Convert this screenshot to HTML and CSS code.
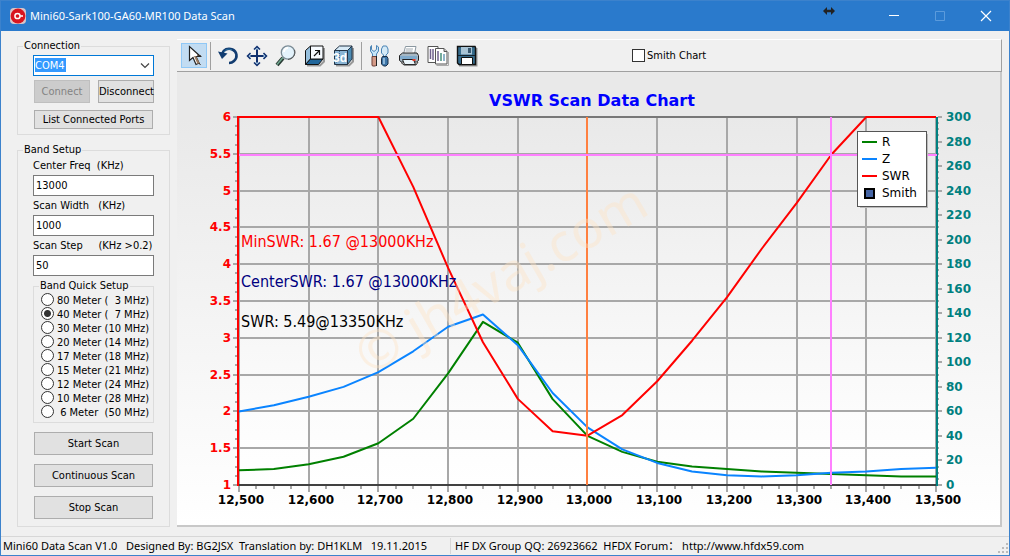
FILE: index.html
```html
<!DOCTYPE html>
<html lang="en">
<head>
	<meta charset="UTF-8" />
	<title>Mini60-Sark100-GA60-MR100 Data Scan</title>
	<link rel="stylesheet" href="styles.css">
</head>
<body>
	<header class="titleBar">
		<svg class="appIcon" width="16" height="16" viewBox="0 0 16 16">
			<rect width="16" height="16" rx="4" fill="#d8c4c8"/>
			<circle cx="8" cy="8" r="7.4" fill="#d8151f"/>
			<circle cx="7.5" cy="8" r="2.6" fill="none" stroke="#fff" stroke-width="1.5"/>
			<path d="M10 8h3M12 7v2" stroke="#fff" fill="none"/>
		</svg>
		<h1 class="title">Mini60-Sark100-GA60-MR100 Data Scan</h1>
		<div class="winButtons">
			<button type="button" aria-label="Minimize"><svg width="12" height="12" viewBox="0 0 12 12"><path d="M1 5.500h10" stroke="#fff"/></svg></button>
			<button type="button" aria-label="Maximize" disabled><svg width="12" height="12" viewBox="0 0 12 12"><path d="M1.5 1.5h9v9h-9z" stroke="#5b9bdc" fill="none"/></svg></button>
			<button type="button" aria-label="Close"><svg width="12" height="12" viewBox="0 0 12 12"><path d="M1 1l10 10M11 1L1 11" stroke="#fff" stroke-width="1.2"/></svg></button>
		</div>
		<svg class="resizeCursor" width="12" height="8" viewBox="0 0 12 8"><path d="M0 4l4-4v2.800h4V0l4 4-4 4V5.200H4V8z" fill="#222"/></svg>
	</header>

	<div class="content">
		<form class="sidebar" action="#">
			<fieldset class="group connection">
				<legend>Connection</legend>
				<div class="combo">
					<select class="field port" aria-label="Port">
						<option>COM4</option>
					</select>
					<svg width="10" height="6" viewBox="0 0 10 6"><path d="M1 .5l4 4 4-4" stroke="#444" stroke-width="1.2" fill="none"/></svg>
				</div>
				<div class="pair">
					<button type="button" class="btn" disabled>Connect</button>
					<button type="button" class="btn">Disconnect</button>
				</div>
				<div class="actions">
					<button type="button" class="btn thin">List Connected Ports</button>
				</div>
			</fieldset>

			<fieldset class="group band">
				<legend>Band Setup</legend>
				<label class="caption" for="centerFreq">Center Freq  (KHz)</label>
				<input class="field" id="centerFreq" type="text" value="13000" />
				<label class="caption" for="scanWidth">Scan Width   (KHz)</label>
				<input class="field" id="scanWidth" type="text" value="1000" />
				<label class="caption" for="scanStep">Scan Step     (KHz >0.2)</label>
				<input class="field" id="scanStep" type="text" value="50" />

				<fieldset class="group quick">
					<legend>Band Quick Setup</legend>
					<label><input type="radio" name="band" />80 Meter (  3 MHz)</label>
					<label><input type="radio" name="band" checked />40 Meter (  7 MHz)</label>
					<label><input type="radio" name="band" />30 Meter (10 MHz)</label>
					<label><input type="radio" name="band" />20 Meter (14 MHz)</label>
					<label><input type="radio" name="band" />17 Meter (18 MHz)</label>
					<label><input type="radio" name="band" />15 Meter (21 MHz)</label>
					<label><input type="radio" name="band" />12 Meter (24 MHz)</label>
					<label><input type="radio" name="band" />10 Meter (28 MHz)</label>
					<label><input type="radio" name="band" /> 6 Meter  (50 MHz)</label>
				</fieldset>

				<div class="actions">
					<button type="button" class="btn">Start Scan</button>
					<button type="button" class="btn">Continuous Scan</button>
					<button type="button" class="btn">Stop Scan</button>
				</div>
			</fieldset>
		</form>

		<main class="chartPanel">
			<div class="toolbar">
				<button type="button" class="tool active" aria-label="Select">
					<svg width="24" height="24" viewBox="0 0 24 24">
						<path d="M7.500 2.500v14l3.500-3 3 7 3-1.500-3-6.500h4.500z" fill="#fff" stroke="#222" stroke-width="1.2"/>
						<path d="M12 12l3.500 8 2-1-3.500-7z" fill="#9a7b62"/>
						<path d="M17 19l1.500 2M15 11l4 1" stroke="#3a2b22"/>
					</svg>
				</button>
				<span class="divider"></span>
				<button type="button" class="tool" aria-label="Rotate">
					<svg width="24" height="24" viewBox="0 0 24 24">
						<path d="M6 10c1.500-4.500 6-6.500 10.500-4.500s5.500 8 1.500 11.500c-1.500 1.500-3 2-5 2" fill="none" stroke="#123c70" stroke-width="2.600"/>
						<path d="M2 7.500l9.500 2-5.500 5.500z" fill="#123c70"/>
						<path d="M8 8c1.500-3 5-3.500 8-2" fill="none" stroke="#2f79a8"/>
					</svg>
				</button>
				<button type="button" class="tool" aria-label="Move">
					<svg width="24" height="24" viewBox="0 0 24 24">
						<path d="M12 3v18M3 12h18" stroke="#10306e" stroke-width="2"/>
						<path d="M9 5.500L12 2.500l3 3M9 18.500l3 3 3-3M5.500 9l-3 3 3 3M18.500 9l3 3-3 3" fill="#a8cde8" stroke="#10306e" stroke-width="1.500"/>
					</svg>
				</button>
				<button type="button" class="tool" aria-label="Zoom">
					<svg width="24" height="24" viewBox="0 0 24 24">
						<path d="M9 14l-6 7" stroke="#283a33" stroke-width="4"/>
						<path d="M9 13.500l-6 7" stroke="#70a890" stroke-width="1.500"/>
						<circle cx="14" cy="8.500" r="6.700" fill="#e3f2fb" stroke="#7b8b95" stroke-width="1.300"/>
						<path d="M20.500 6c1.500 5-2 9-6.500 9.500" fill="none" stroke="#555"/>
						<path d="M10 8c0-2.500 2-4 4-4" fill="none" stroke="#fff" stroke-width="2"/>
					</svg>
				</button>
				<button type="button" class="tool" aria-label="Depth">
					<svg width="24" height="24" viewBox="0 0 24 24">
						<path d="M4 21.500h13l4-4V4" fill="none" stroke="#999" stroke-width="2"/>
						<path d="M2.500 6.500l5-4.500v13l-5 5.500z" fill="#96bfdd" stroke="#111"/>
						<path d="M2.500 20.500l5-5.500H20l-4.500 5.500z" fill="#20669b" stroke="#111"/>
						<path d="M7.500 2H20v13H7.500z" fill="#f7fbff" stroke="#111"/>
						<path d="M11 12l5-5M12 6.500h4.500V11" fill="none" stroke="#111" stroke-width="1.200"/>
					</svg>
				</button>
				<button type="button" class="tool" aria-label="3D">
					<svg width="24" height="24" viewBox="0 0 24 24">
						<path d="M4 21.500h13l4-4V4" fill="none" stroke="#999" stroke-width="2"/>
						<path d="M2.500 6.500l5-4.500H20l-4.500 4.500z" fill="#d7eaf7" stroke="#234"/>
						<path d="M2.500 6.500h13v14h-13z" fill="#8ab5d5" stroke="#234"/>
						<path d="M15.500 6.500L20 2v13l-4.500 5.500z" fill="#4d8cb4" stroke="#234"/>
						<path d="M7.500 7v8l-5 5.500M7.500 15H20" fill="none" stroke="#39688d" stroke-dasharray="1 1"/>
						<text class="tag3d" x="1" y="18">3d</text>
					</svg>
				</button>
				<span class="divider"></span>
				<button type="button" class="tool" aria-label="Options">
					<svg width="24" height="24" viewBox="0 0 24 24">
						<path d="M3.500 1.500v4L6 7.500 8.500 5.500v-4l2 1.500v4L8.500 10v3h-4v-3L2.500 7V3z" fill="#c6e5f8" stroke="#4b84b5"/>
						<path d="M4 12.500h4.500V21l-1 1h-3L4 21z" fill="#d49a87" stroke="#6e4038"/>
						<path d="M8.500 12v10" stroke="#222"/>
						<path d="M15 2h3.500l1.500 3v4l-2 2v2h-2.500v-2l-2-2V5z" fill="#d4eaf7" stroke="#4b84b5"/>
						<path d="M14.500 12.500h4.500l1 2V20l-2 2h-2.500l-2-2v-5.500z" fill="#3e76a8" stroke="#192e48"/>
						<path d="M16 14v6" stroke="#a9cde8" stroke-width="1.500"/>
					</svg>
				</button>
				<button type="button" class="tool" aria-label="Print">
					<svg width="24" height="24" viewBox="0 0 24 24">
						<path d="M6.500 10l2-7.500H19l-1.500 7.500z" fill="#fff" stroke="#8b98a1"/>
						<path d="M9 5h7M8.500 7h7" stroke="#a0aab1"/>
						<path d="M2.500 11.500l3-2.500H20l1.500 2.500v5l-2 1.500H4.500l-2-1.500z" fill="#a7b8c4" stroke="#222"/>
						<path d="M3 12h17v3H3z" fill="#7faacc"/>
						<path d="M5.500 15.500h11l2 5h-11z" fill="#eaf5fb" stroke="#222"/>
						<path d="M15.500 15h3v2h-3z" fill="#e23b28"/>
						<path d="M4 18.500l3 2.500h12l2-3" stroke="#333" fill="none"/>
					</svg>
				</button>
				<button type="button" class="tool" aria-label="Copy">
					<svg width="24" height="24" viewBox="0 0 24 24">
						<path d="M2 2.500h10v16H2z" fill="#fff" stroke="#555"/>
						<path d="M4.500 5v10M7 5v11" stroke="#70618d" stroke-width="1.500"/>
						<path d="M9.500 4.500H18l3 3V20H9.500z" fill="#fff" stroke="#555"/>
						<path d="M18 4.500v3h3" fill="#ccc" stroke="#555"/>
						<path d="M12 7v10" stroke="#70618d" stroke-width="1.500"/>
						<path d="M15 9v8" stroke="#47917b" stroke-width="1.500"/>
						<path d="M18 10v7" stroke="#6b9bb9" stroke-width="1.500"/>
						<path d="M10.500 21.500H22.500V8" stroke="#aaa" fill="none"/>
					</svg>
				</button>
				<button type="button" class="tool" aria-label="Save">
					<svg width="24" height="24" viewBox="0 0 24 24">
						<path d="M4 21.500h17.500V4" stroke="#999" stroke-width="2" fill="none"/>
						<path d="M2.500 2.500H20l.5 1V20.500H4l-1.500-1.500z" fill="#356b8c" stroke="#111" stroke-width="1.400"/>
						<path d="M6 3h11v7.500H6z" fill="#a8c3d4"/>
						<path d="M13 4h3v5h-3z" fill="#37566d"/>
						<path d="M3 11.500h17" stroke="#14222d"/>
						<path d="M6.500 13.500h11v7h-11z" fill="#fff" stroke="#111"/>
					</svg>
				</button>
				<label class="smithToggle"><input type="checkbox" />Smith Chart</label>
			</div>
			<svg class="chart" id="chart" viewBox="0 0 823 453" role="img" aria-label="VSWR Scan Data Chart">
				<defs>
					<linearGradient id="panelFill" x1="0" y1="0" x2="0" y2="1">
						<stop offset="0.1" stop-color="#e9e9e9"/>
						<stop offset="1" stop-color="#fff"/>
					</linearGradient>
					<linearGradient id="plotFill" x1="0" y1="0" x2="0" y2="1">
						<stop offset="0" stop-color="#e9e9e9"/>
						<stop offset="0.800" stop-color="#fcfcfc"/>
						<stop offset="1" stop-color="#fff"/>
					</linearGradient>
				</defs>
				<rect width="823" height="453" fill="url(#panelFill)"/>
				<rect x="62" y="45" width="698" height="368" fill="url(#plotFill)"/>
				<text class="chartTitle" x="415" y="34">VSWR Scan Data Chart</text>
				<g id="grid"></g>
				<g id="series"></g>
				<path class="axisLeft" d="M61 44v370"/>
				<path class="axisRight" d="M760 45v369"/>
				<path class="marker center" d="M410 45v368"/>
				<path class="marker cursor" d="M654 45v368M62 83h698"/>
				<text class="note min" x="64" y="175">MinSWR: 1.67 @13000KHz</text>
				<text class="note mid" x="64" y="215">CenterSWR: 1.67 @13000KHz</text>
				<text class="note" x="64" y="255">SWR: 5.49@13350KHz</text>
				<g class="legend">
					<rect x="683" y="62" width="68" height="74" fill="#bbb"/>
					<rect x="680.500" y="59.500" width="69" height="75" fill="#fff" stroke="#555"/>
					<path d="M685 70h15" stroke="#008000" stroke-width="2"/>
					<path d="M685 87h15" stroke="#0a84ff" stroke-width="2"/>
					<path d="M685 104h15" stroke="#f00" stroke-width="2"/>
					<rect x="688" y="117" width="9" height="9" fill="#4565a5" stroke="#000" stroke-width="2"/>
					<text x="705" y="74">R</text>
					<text x="705" y="91">Z</text>
					<text x="705" y="108">SWR</text>
					<text x="705" y="125">Smith</text>
				</g>
				<text class="watermark" transform="translate(192 304) rotate(-30)">© jh4vaj.com</text>
			</svg>
		</main>
	</div>

	<footer class="statusBar">
		<div class="credits">Mini60 Data Scan V1.0   Designed By: BG2JSX  Translation by: DH1KLM   19.11.2015</div>
		<div class="links">HF DX Group QQ: 26923662  HFDX Forum： http://www.hfdx59.com</div>
		<svg class="grip" width="12" height="12" viewBox="0 0 12 12"><path d="M9 1h2M9 5h2M5 5h2M9 9h2M5 9h2M1 9h2" stroke="#bbb" stroke-width="2"/></svg>
	</footer>
	<script src="chart.js"></script>
</body>
</html>
```

FILE: styles.css
```css
*{
	box-sizing: border-box;
	margin: 0;padding: 0;
}
body{
	display: flex;
	flex-direction: column;
	min-height: 100vh;
	border: 1px solid #3c82cc;
	background: #f0f0f0;
	color: #000;
	font: 11px/14px "DejaVu Sans Condensed","Noto Sans",sans-serif;
}
button,input,select{
	font: inherit;
	color: inherit;
}
svg{
	display: block;
}

/* title bar */
.titleBar{
	position: relative;
	display: flex;
	align-items: center;
	height: 30px;
	padding-left: 9px;
	background: #2a7acc;
	color: #fff;
}
.title{
	flex: 1;
	margin-left: 4px;
	font: 11px/16px "Noto Sans",sans-serif;
}
.winButtons{
	display: flex;
}
.winButtons button{
	display: flex;
	align-items: center;
	justify-content: center;
	width: 46px;height: 30px;
	border: 0;
	background: none;
}
.resizeCursor{
	position: absolute;
	top: 6px;right: 174px;
}

/* left column */
.content{
	display: flex;
	flex: 1;
	padding: 8px 7px 8px 16px;
}
.sidebar{
	flex: none;
	width: 153px;
	margin-right: 7px;
}
.group{
	min-width: 0;
	border: 1px solid #dcdcdc;
}
.group legend{
	margin-left: -10px;
	padding: 0 1px;
	line-height: 12px;
}
.connection{
	margin-top: 1px;
	padding: 3px 15px 5px;
}
.band{
	margin-top: 9px;
	padding: 0 15px 7px;
}
.combo{
	position: relative;
}
.combo svg{
	position: absolute;
	top: 8px;right: 4px;
	pointer-events: none;
}
.field{
	display: block;
	width: 100%;height: 21px;
	padding: 0 2px;
	border: 1px solid #7a7a7a;
	background: #fff;
}
.port{
	appearance: none;
	padding: 0 1px;
	border-color: #0078d7;
	background: linear-gradient(#39f,#39f) 1px 2px / 31px 14px no-repeat #fff;
	color: #fff;
}
.pair{
	display: flex;
	justify-content: space-between;
	margin: 4px 0 7px 1px;
}
.btn{
	height: 23px;
	border: 1px solid #adadad;
	background: #e1e1e1;
	white-space: nowrap;
}
.btn:disabled{
	border-color: #bfbfbf;
	background: #ccc;
	color: #838383;
}
.pair .btn{
	width: 56px;
}
.btn.thin{
	height: 19px;
}
.caption{
	display: block;
	height: 19px;
	line-height: 19px;
	white-space: pre;
}
.group.quick{
	margin-top: 4px;
	padding: 2px 6px;
}
.quick legend{
	margin-left: -1px;
}
.quick label{
	display: flex;
	align-items: center;
	height: 14px;
	white-space: pre;
}
.quick input{
	appearance: none;
	flex: none;
	width: 13px;height: 13px;
	margin: 0 3px 3px 1px;
	border: 1px solid #333;
	border-radius: 50%;
	background: #fff;
}
.quick input:checked{
	background: radial-gradient(circle,#333 3px,#fff 4px);
}
.group .quick legend,.quick legend{
	margin-left: -1px;
}
.actions{
	display: flex;
	flex-direction: column;
	gap: 9px;
	padding: 0 1px;
}
.quick + .actions{
	margin-top: 9px;
}

/* toolbar */
.chartPanel{
	flex: 1;
	min-width: 0;
}
.toolbar{
	display: flex;
	align-items: center;
	height: 33px;
	padding-left: 4px;
	border-top: 1px solid #fff;
	border-right: 1px solid #a0a0a0;
	border-bottom: 1px solid #a0a0a0;
}
.tool{
	display: flex;
	align-items: center;
	justify-content: center;
	width: 29px;height: 25px;
	border: 0;
	background: none;
}
.tool.active{
	width: 26px;
	border: 1px solid #90c8f6;
	background: #c2dcf2;
}
.divider{
	width: 1px;height: 28px;
	margin: 0 3px;
	background: #a0a0a0;
}
.active + .divider{
	margin-right: 2px;
}
.tag3d{
	font: bold 12px "Liberation Sans",sans-serif;
	fill: #fff;
}
.smithToggle{
	display: flex;
	align-items: center;
	margin-left: 151px;
}
.smithToggle input{
	appearance: none;
	width: 13px;height: 13px;
	margin-right: 2px;
	border: 1px solid #333;
	background: #fff;
}

/* chart */
.chart{
	width: 100%;
	border: solid #c8c8c8;
	border-width: 0 2px 2px 0;
}
.chart text{
	font: 12px "DejaVu Sans",sans-serif;
}
.chart .chartTitle{
	font-size: 16px;
	font-weight: bold;
	text-anchor: middle;
	fill: #00f;
}
.chart .note{
	font: 16px "DejaVu Sans Condensed","Noto Sans",sans-serif;
}
.chart .min{
	fill: #f00;
}
.chart .mid{
	fill: #000080;
}
.chart .watermark{
	font: 53px "Noto Sans",sans-serif;
	fill: #ffe4c4;
	opacity: .4;
}
.chart .tickLabel{
	font-weight: bold;
	text-anchor: middle;
}
.chart .tickLabel.left{
	text-anchor: end;
	fill: #f00;
}
.chart .tickLabel.right{
	text-anchor: start;
	fill: #008080;
}
.gridLine,.tick{
	stroke: #a8a8a8;
	stroke-width: 2;
}
.frameTop{
	stroke: #777;
	stroke-width: 2;
}
.frameBottom{
	stroke: #404040;
	stroke-width: 2;
}
.line{
	fill: none;
	stroke-width: 2;
	stroke-linejoin: round;
}
.line.r{stroke: #008000;}
.line.z{stroke: #0a84ff;}
.line.swr{stroke: #f00;}
.axisLeft{
	stroke: #f00;
	stroke-width: 2;
}
.axisRight{
	stroke: #008080;
	stroke-width: 2;
}
.marker{
	fill: none;
	stroke-width: 2;
}
.marker.center{stroke: #ff8040;}
.marker.cursor{stroke: #ff80ff;}

/* status bar */
.statusBar{
	display: flex;
	align-items: center;
	height: 19px;
	border-top: 1px solid #d7d7d7;
	font: 11px/16px "Noto Sans","Noto Sans CJK SC",sans-serif;
	white-space: pre;
}
.credits{
	width: 450px;
	padding-left: 2px;
	border-right: 1px solid #d7d7d7;
}
.links{
	flex: 1;
	padding-left: 4px;
}
.grip{
	align-self: flex-end;
}
```

FILE: chart.js
```js
var NS = 'http://www.w3.org/2000/svg',
	plot = {left: 62, right: 759, top: 45, bottom: 413},
	freqs = {min: 12500, max: 13500, step: 50};

// impedance uses the right scale, SWR the left one
var series = [
	{name: 'r', min: 0, max: 300, data: [12,13,17,23,34,54,91,133,116,70,40,27,19,15,13,11,10,9,8,7,7]},
	{name: 'z', min: 0, max: 300, data: [60,65,72,80,92,109,129,139,114,75,47,29,18,11,8,7,8,10,11,13,14]},
	{name: 'swr', min: 1, max: 6, data: [6,6,6,6,6,5.05,3.95,2.94,2.17,1.73,1.67,1.95,2.41,2.96,3.55,4.21,4.83,5.49,6,6,6]}
];

function xPos(freq){
	return plot.left + (freq - freqs.min) / (freqs.max - freqs.min) * (plot.right - plot.left);
}

function yPos(value, min, max){
	return plot.bottom - (value - min) / (max - min) * (plot.bottom - plot.top);
}

function add(parent, tag, cls, attrs, text){
	var el = document.createElementNS(NS, tag);
	el.setAttribute('class', cls);
	for(var key in attrs){
		el.setAttribute(key, attrs[key]);
	}
	if(text !== undefined){
		el.textContent = text;
	}
	parent.appendChild(el);
}

function segment(parent, cls, x1, y1, x2, y2){
	add(parent, 'line', cls, {x1: x1, y1: y1, x2: x2, y2: y2});
}

var grid = document.getElementById('grid'), i, x, y;

// frequency axis, a label every fourth tick
for(i = 0; i <= 40; i++){
	x = Math.ceil(xPos(freqs.min + i * 25) - 0.5);
	segment(grid, 'tick', x, plot.bottom, x, plot.bottom + (i % 4 ? 4 : 7));
	if(i % 4 === 0){
		segment(grid, 'gridLine', x, plot.top, x, plot.bottom);
		add(grid, 'text', 'tickLabel', {x: x + 2, y: 432}, (freqs.min + i * 25).toLocaleString('en-US'));
	}
}

// SWR axis
for(i = 0; i <= 40; i++){
	y = Math.round(yPos(i, 0, 40));
	segment(grid, 'tick', i % 4 ? 58 : 56, y, 60, y);
	if(i % 4 === 0){
		segment(grid, 'gridLine', plot.left, y, plot.right, y);
		add(grid, 'text', 'tickLabel left', {x: 54, y: y + 4}, 1 + i / 8);
	}
}

// impedance axis
for(i = 0; i <= 60; i++){
	y = Math.round(yPos(i, 0, 60));
	segment(grid, 'tick', 761, y, i % 4 ? 762 : 765, y);
	if(i % 4 === 0){
		add(grid, 'text', 'tickLabel right', {x: 769, y: y + 4}, i * 5);
	}
}

segment(grid, 'frameTop', plot.left, plot.top, plot.right, plot.top);
segment(grid, 'frameBottom', plot.left, plot.bottom, plot.right, plot.bottom);

series.forEach(function(s){
	var points = s.data.map(function(value, n){
		return xPos(freqs.min + n * freqs.step) + ',' + yPos(value, s.min, s.max);
	});
	add(document.getElementById('series'), 'polyline', 'line ' + s.name, {points: points.join(' ')});
});
```
